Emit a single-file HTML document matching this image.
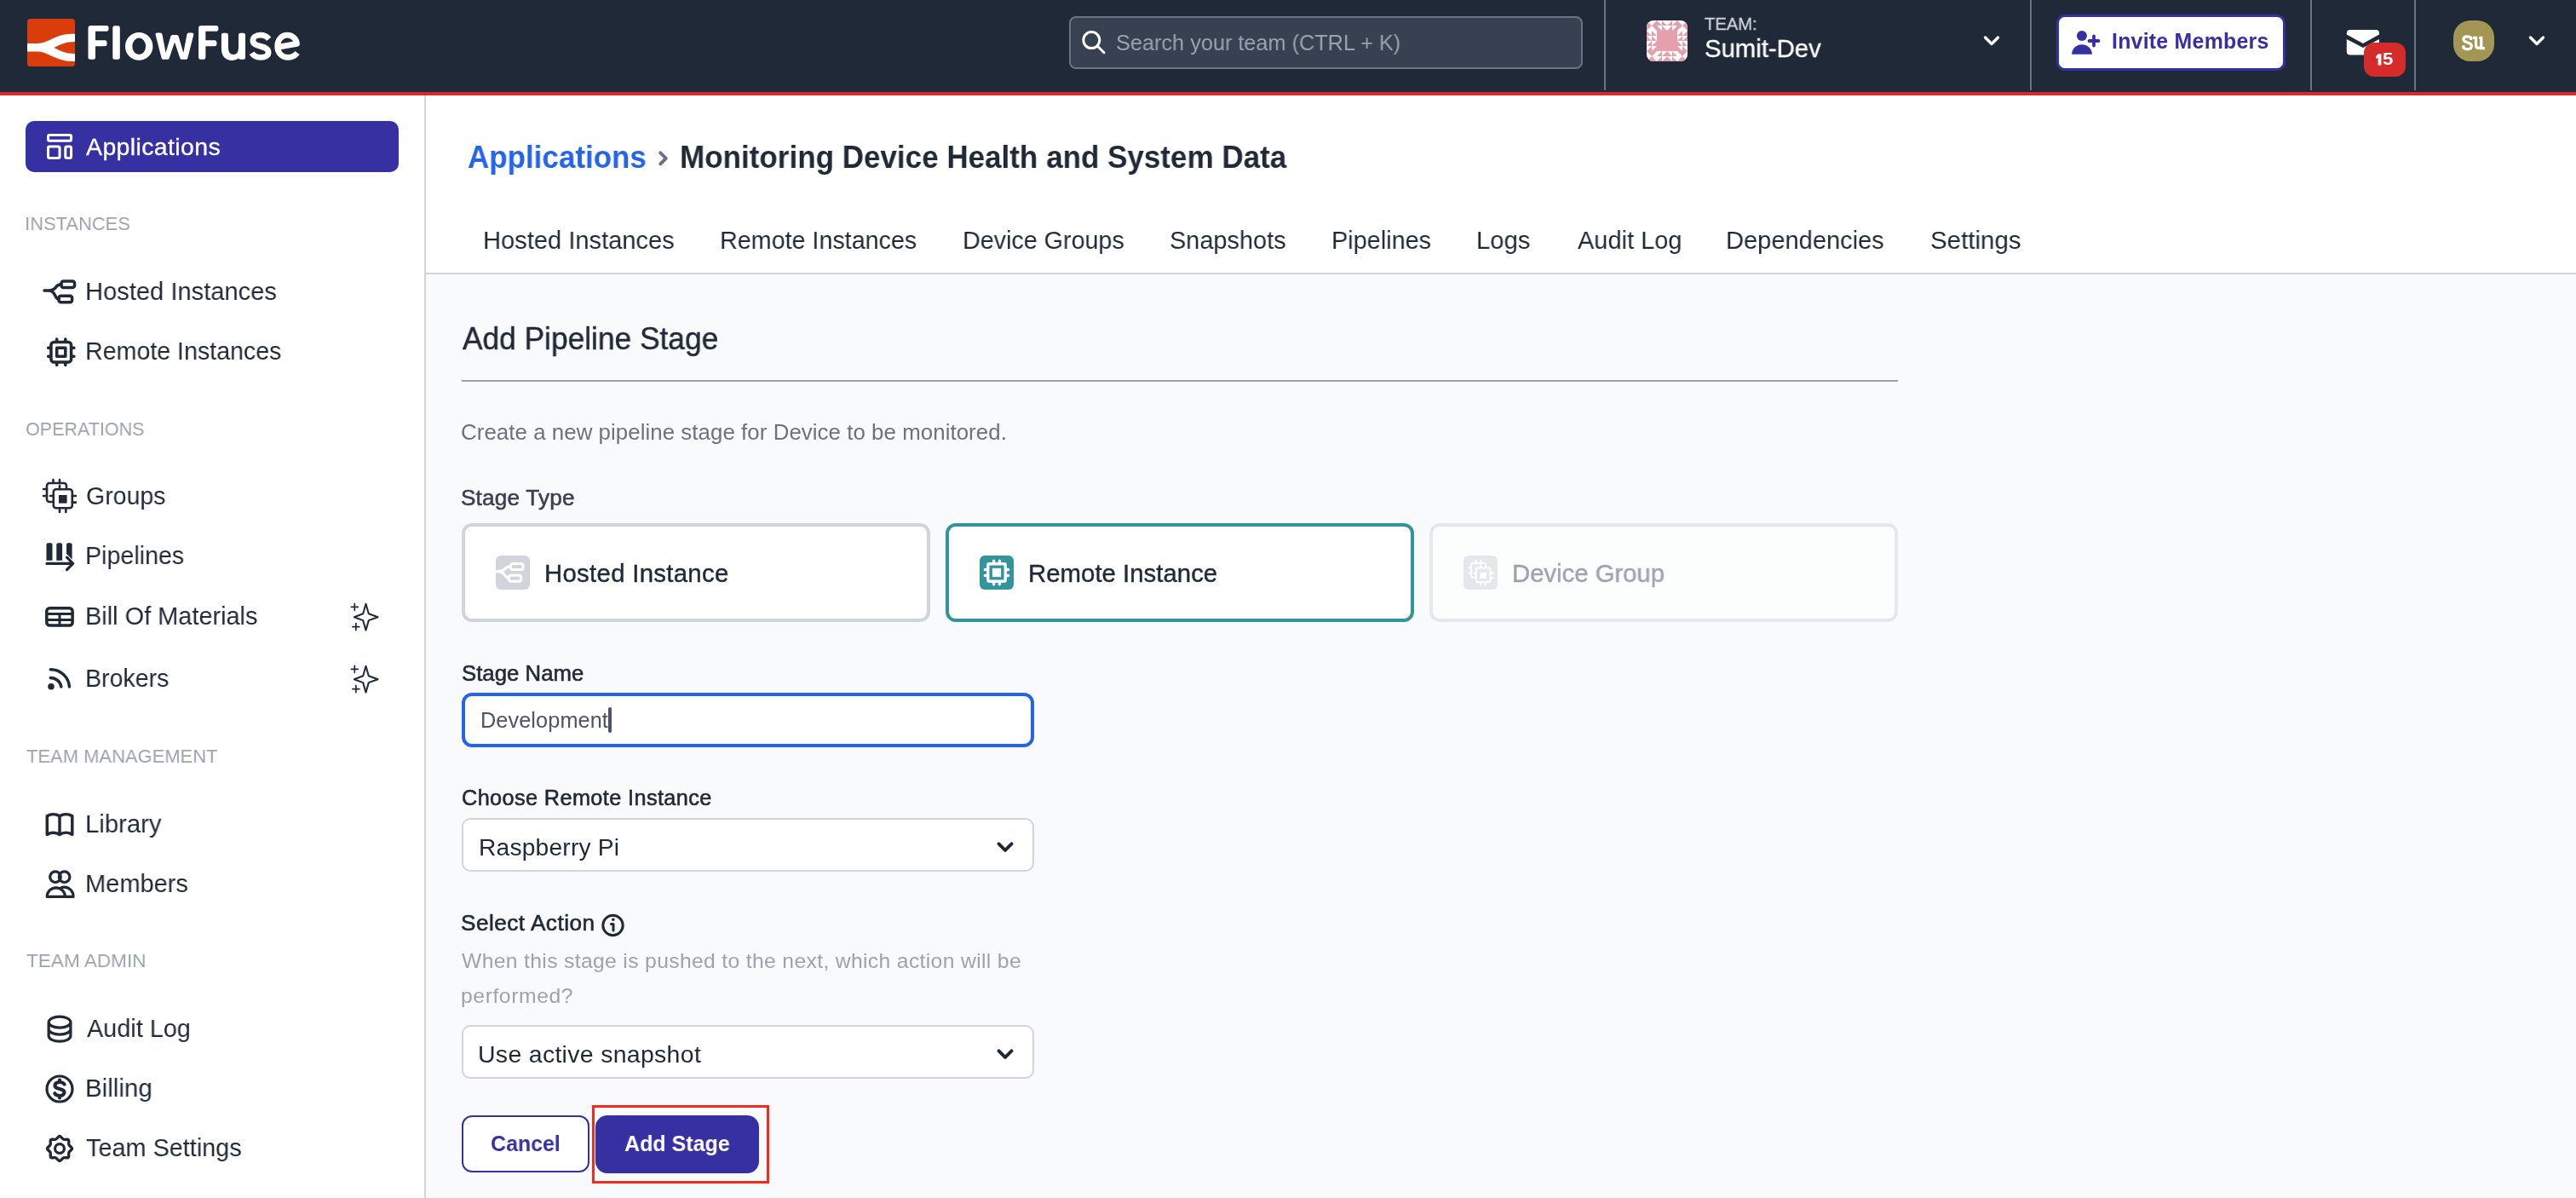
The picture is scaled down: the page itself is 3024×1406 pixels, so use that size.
<!DOCTYPE html>
<html><head><meta charset="utf-8"><style>
html,body{margin:0;padding:0;width:3024px;height:1406px;overflow:hidden;background:#fff}
body{position:relative;font-family:"Liberation Sans",sans-serif}
.t{position:absolute;white-space:pre;font-family:"Liberation Sans",sans-serif;will-change:transform}
svg{display:block}
</style></head><body>
<div style="position:absolute;left:0px;top:0px;width:3024px;height:108px;background:#1f2937"></div>
<div style="position:absolute;left:0px;top:108px;width:3024px;height:4px;background:#d62a2a"></div>
<div style="position:absolute;left:0px;top:112px;width:498px;height:1294px;background:#fff"></div>
<div style="position:absolute;left:498px;top:112px;width:2px;height:1294px;background:#d1d5db"></div>
<div style="position:absolute;left:500px;top:112px;width:2524px;height:208px;background:#fff"></div>
<div style="position:absolute;left:500px;top:320px;width:2524px;height:2px;background:#d1d5db"></div>
<div style="position:absolute;left:500px;top:322px;width:2524px;height:1084px;background:#f9fafb"></div>
<div style="position:absolute;left:1255px;top:19px;width:603px;height:62px;background:#374151;border:2px solid #6b7280;border-radius:8px;box-sizing:border-box"></div>
<div class="t" style="left:1310.35px;top:37.65px;font-size:25.58px;line-height:25.58px;font-weight:400;color:#9ca3af;letter-spacing:0.000px;transform:scaleX(0.9885);transform-origin:1.15px 0">Search your team (CTRL + K)</div>
<div style="position:absolute;left:1883px;top:0px;width:2px;height:106px;background:#6b7280"></div>
<div class="t" style="left:2001.28px;top:17.26px;font-size:21.08px;line-height:21.08px;font-weight:400;color:#d1d5db;letter-spacing:0.000px;transform:scaleX(0.9570);transform-origin:0.42px 0;-webkit-text-stroke:0.3px #d1d5db">TEAM:</div>
<div class="t" style="left:2000.65px;top:41.75px;font-size:29.94px;line-height:29.94px;font-weight:400;color:#fff;letter-spacing:0.000px;transform:scaleX(0.9788);transform-origin:1.35px 0;-webkit-text-stroke:0.3px #fff">Sumit-Dev</div>
<div style="position:absolute;left:2383px;top:0px;width:2px;height:106px;background:#6b7280"></div>
<div style="position:absolute;left:2414px;top:17px;width:269px;height:66px;background:#fff;border:3px solid #3730a3;border-radius:10px;box-sizing:border-box"></div>
<div class="t" style="left:2479.38px;top:37.06px;font-size:24.85px;line-height:24.85px;font-weight:700;color:#3730a3;letter-spacing:0.259px">Invite Members</div>
<div style="position:absolute;left:2712px;top:0px;width:2px;height:106px;background:#6b7280"></div>
<div style="position:absolute;left:2834px;top:0px;width:2px;height:106px;background:#6b7280"></div>
<div style="position:absolute;left:2880px;top:24px;width:48px;height:48px;background:#a39654;border-radius:20px"></div>
<div style="position:absolute;left:30px;top:142px;width:438px;height:60px;background:#3730a3;border-radius:10px"></div>
<div class="t" style="left:101.20px;top:158.28px;font-size:28.49px;line-height:28.49px;font-weight:400;color:#fff;letter-spacing:0.377px;-webkit-text-stroke:0.3px #fff">Applications</div>
<div class="t" style="left:29.23px;top:251.36px;font-size:22.97px;line-height:22.97px;font-weight:400;color:#9ca3af;letter-spacing:0.000px;transform:scaleX(0.9539);transform-origin:2.07px 0">INSTANCES</div>
<div class="t" style="left:30.27px;top:492.36px;font-size:22.97px;line-height:22.97px;font-weight:400;color:#9ca3af;letter-spacing:0.000px;transform:scaleX(0.9363);transform-origin:1.03px 0">OPERATIONS</div>
<div class="t" style="left:30.84px;top:875.86px;font-size:22.97px;line-height:22.97px;font-weight:400;color:#9ca3af;letter-spacing:0.000px;transform:scaleX(0.9560);transform-origin:0.46px 0">TEAM MANAGEMENT</div>
<div class="t" style="left:30.84px;top:1116.06px;font-size:22.97px;line-height:22.97px;font-weight:400;color:#9ca3af;letter-spacing:0.000px;transform:scaleX(0.9833);transform-origin:0.46px 0">TEAM ADMIN</div>
<div class="t" style="left:99.62px;top:327.48px;font-size:29.80px;line-height:29.80px;font-weight:400;color:#1f2937;letter-spacing:0.000px;transform:scaleX(0.9768);transform-origin:2.38px 0">Hosted Instances</div>
<div class="t" style="left:99.62px;top:397.28px;font-size:29.80px;line-height:29.80px;font-weight:400;color:#1f2937;letter-spacing:0.000px;transform:scaleX(0.9589);transform-origin:2.38px 0">Remote Instances</div>
<div class="t" style="left:100.51px;top:566.78px;font-size:29.80px;line-height:29.80px;font-weight:400;color:#1f2937;letter-spacing:0.000px;transform:scaleX(0.9559);transform-origin:1.49px 0">Groups</div>
<div class="t" style="left:99.62px;top:636.78px;font-size:29.80px;line-height:29.80px;font-weight:400;color:#1f2937;letter-spacing:0.000px;transform:scaleX(0.9596);transform-origin:2.38px 0">Pipelines</div>
<div class="t" style="left:99.62px;top:707.78px;font-size:29.80px;line-height:29.80px;font-weight:400;color:#1f2937;letter-spacing:0.000px;transform:scaleX(0.9700);transform-origin:2.38px 0">Bill Of Materials</div>
<div class="t" style="left:99.62px;top:780.78px;font-size:29.80px;line-height:29.80px;font-weight:400;color:#1f2937;letter-spacing:0.000px;transform:scaleX(0.9574);transform-origin:2.38px 0">Brokers</div>
<div class="t" style="left:99.62px;top:952.48px;font-size:29.80px;line-height:29.80px;font-weight:400;color:#1f2937;letter-spacing:0.000px;transform:scaleX(0.9814);transform-origin:2.38px 0">Library</div>
<div class="t" style="left:99.62px;top:1022.08px;font-size:29.80px;line-height:29.80px;font-weight:400;color:#1f2937;letter-spacing:0.000px;transform:scaleX(0.9733);transform-origin:2.38px 0">Members</div>
<div class="t" style="left:102.00px;top:1192.48px;font-size:29.80px;line-height:29.80px;font-weight:400;color:#1f2937;letter-spacing:0.000px;transform:scaleX(0.9681);transform-origin:0.00px 0">Audit Log</div>
<div class="t" style="left:99.62px;top:1262.08px;font-size:29.80px;line-height:29.80px;font-weight:400;color:#1f2937;letter-spacing:0.000px;transform:scaleX(0.9908);transform-origin:2.38px 0">Billing</div>
<div class="t" style="left:101.40px;top:1332.18px;font-size:29.80px;line-height:29.80px;font-weight:400;color:#1f2937;letter-spacing:0.000px;transform:scaleX(0.9673);transform-origin:0.60px 0">Team Settings</div>
<div class="t" style="left:549.10px;top:167.39px;font-size:36.05px;line-height:36.05px;font-weight:700;color:#2563eb;letter-spacing:0.000px;transform:scaleX(0.9699);transform-origin:0.90px 0">Applications</div>
<div class="t" style="left:798.16px;top:167.39px;font-size:36.05px;line-height:36.05px;font-weight:700;color:#1f2937;letter-spacing:0.000px;transform:scaleX(0.9715);transform-origin:2.34px 0">Monitoring Device Health and System Data</div>
<div class="t" style="left:566.52px;top:266.78px;font-size:29.80px;line-height:29.80px;font-weight:400;color:#1f2937;letter-spacing:0.000px;transform:scaleX(0.9760);transform-origin:2.38px 0">Hosted Instances</div>
<div class="t" style="left:844.82px;top:266.78px;font-size:29.80px;line-height:29.80px;font-weight:400;color:#1f2937;letter-spacing:0.000px;transform:scaleX(0.9623);transform-origin:2.38px 0">Remote Instances</div>
<div class="t" style="left:1129.52px;top:266.78px;font-size:29.80px;line-height:29.80px;font-weight:400;color:#1f2937;letter-spacing:0.000px;transform:scaleX(0.9624);transform-origin:2.38px 0">Device Groups</div>
<div class="t" style="left:1373.26px;top:266.78px;font-size:29.80px;line-height:29.80px;font-weight:400;color:#1f2937;letter-spacing:0.000px;transform:scaleX(0.9696);transform-origin:1.34px 0">Snapshots</div>
<div class="t" style="left:1563.32px;top:266.78px;font-size:29.80px;line-height:29.80px;font-weight:400;color:#1f2937;letter-spacing:0.000px;transform:scaleX(0.9673);transform-origin:2.38px 0">Pipelines</div>
<div class="t" style="left:1732.82px;top:266.78px;font-size:29.80px;line-height:29.80px;font-weight:400;color:#1f2937;letter-spacing:0.000px;transform:scaleX(0.9799);transform-origin:2.38px 0">Logs</div>
<div class="t" style="left:1851.60px;top:266.78px;font-size:29.80px;line-height:29.80px;font-weight:400;color:#1f2937;letter-spacing:0.000px;transform:scaleX(0.9729);transform-origin:0.00px 0">Audit Log</div>
<div class="t" style="left:2026.22px;top:266.78px;font-size:29.80px;line-height:29.80px;font-weight:400;color:#1f2937;letter-spacing:0.000px;transform:scaleX(0.9748);transform-origin:2.38px 0">Dependencies</div>
<div class="t" style="left:2265.96px;top:266.78px;font-size:29.80px;line-height:29.80px;font-weight:400;color:#1f2937;letter-spacing:0.000px;transform:scaleX(0.9902);transform-origin:1.34px 0">Settings</div>
<div class="t" style="left:543.10px;top:379.62px;font-size:36.48px;line-height:36.48px;font-weight:400;color:#1f2937;letter-spacing:0.000px;transform:scaleX(0.9678);transform-origin:0.00px 0;-webkit-text-stroke:0.45px #1f2937">Add Pipeline Stage</div>
<div style="position:absolute;left:542px;top:446px;width:1686px;height:2px;background:#9ca3af"></div>
<div class="t" style="left:541.21px;top:494.60px;font-size:25.87px;line-height:25.87px;font-weight:400;color:#6b7280;letter-spacing:0.048px">Create a new pipeline stage for Device to be monitored.</div>
<div class="t" style="left:541.32px;top:570.85px;font-size:26.16px;line-height:26.16px;font-weight:400;color:#374151;letter-spacing:0.177px;-webkit-text-stroke:0.55px #374151">Stage Type</div>
<div style="position:absolute;left:542px;top:614px;width:550px;height:116px;background:#fff;border:4px solid #d1d5db;border-radius:12px;box-sizing:border-box"></div>
<div style="position:absolute;left:582px;top:652px;width:40px;height:40px;background:#d1d5db;border-radius:6px"></div>
<div class="t" style="left:639.15px;top:657.95px;font-size:29.36px;line-height:29.36px;font-weight:400;color:#1f2937;letter-spacing:0.289px;-webkit-text-stroke:0.4px #1f2937">Hosted Instance</div>
<div style="position:absolute;left:1110px;top:614px;width:550px;height:116px;background:#fff;border:4px solid #31959b;border-radius:12px;box-sizing:border-box"></div>
<div style="position:absolute;left:1150px;top:652px;width:40px;height:40px;background:#31959b;border-radius:6px"></div>
<div class="t" style="left:1207.15px;top:657.95px;font-size:29.36px;line-height:29.36px;font-weight:400;color:#1f2937;letter-spacing:0.015px;-webkit-text-stroke:0.4px #1f2937">Remote Instance</div>
<div style="position:absolute;left:1678px;top:614px;width:550px;height:116px;background:#fcfdfd;border:4px solid #e5e7eb;border-radius:12px;box-sizing:border-box"></div>
<div style="position:absolute;left:1718px;top:652px;width:40px;height:40px;background:#e5e7eb;border-radius:6px"></div>
<div class="t" style="left:1775.15px;top:657.95px;font-size:29.36px;line-height:29.36px;font-weight:400;color:#9ca3af;letter-spacing:0.000px;transform:scaleX(0.9971);transform-origin:2.35px 0;-webkit-text-stroke:0.4px #9ca3af">Device Group</div>
<div class="t" style="left:541.84px;top:777.52px;font-size:25.73px;line-height:25.73px;font-weight:400;color:#1f2937;letter-spacing:0.031px;-webkit-text-stroke:0.6px #1f2937">Stage Name</div>
<div style="position:absolute;left:542px;top:813px;width:672px;height:64px;background:#fff;border:4px solid #2563eb;border-radius:12px;box-sizing:border-box"></div>
<div class="t" style="left:564.28px;top:832.59px;font-size:25.29px;line-height:25.29px;font-weight:400;color:#4b5563;letter-spacing:0.089px">Development</div>
<div style="position:absolute;left:714px;top:830px;width:4px;height:29.5px;background:#4b5563;border-radius:2px"></div>
<div class="t" style="left:541.74px;top:923.59px;font-size:25.29px;line-height:25.29px;font-weight:400;color:#1f2937;letter-spacing:0.381px;-webkit-text-stroke:0.6px #1f2937">Choose Remote Instance</div>
<div style="position:absolute;left:542px;top:960px;width:672px;height:63px;background:#fff;border:2px solid #d1d5db;border-radius:10px;box-sizing:border-box"></div>
<div class="t" style="left:561.74px;top:980.13px;font-size:28.20px;line-height:28.20px;font-weight:400;color:#1f2937;letter-spacing:0.191px">Raspberry Pi</div>
<div class="t" style="left:541.32px;top:1070.15px;font-size:26.16px;line-height:26.16px;font-weight:400;color:#1f2937;letter-spacing:0.488px;-webkit-text-stroke:0.6px #1f2937">Select Action</div>
<div class="t" style="left:542.38px;top:1116.38px;font-size:24.71px;line-height:24.71px;font-weight:400;color:#9ca3af;letter-spacing:0.336px">When this stage is pushed to the next, which action will be</div>
<div class="t" style="left:540.89px;top:1156.68px;font-size:24.71px;line-height:24.71px;font-weight:400;color:#9ca3af;letter-spacing:0.576px">performed?</div>
<div style="position:absolute;left:542px;top:1203px;width:672px;height:63px;background:#fff;border:2px solid #d1d5db;border-radius:10px;box-sizing:border-box"></div>
<div class="t" style="left:561.46px;top:1223.18px;font-size:28.49px;line-height:28.49px;font-weight:400;color:#1f2937;letter-spacing:0.294px">Use active snapshot</div>
<div style="position:absolute;left:542px;top:1309px;width:150px;height:67px;background:#fff;border:2px solid #3730a3;border-radius:12px;box-sizing:border-box"></div>
<div class="t" style="left:575.95px;top:1328.85px;font-size:26.16px;line-height:26.16px;font-weight:700;color:#3730a3;letter-spacing:0.000px;transform:scaleX(0.9525);transform-origin:1.05px 0">Cancel</div>
<div style="position:absolute;left:699px;top:1309px;width:192px;height:68px;background:#3730a3;border-radius:14px"></div>
<div class="t" style="left:733.05px;top:1328.85px;font-size:26.16px;line-height:26.16px;font-weight:700;color:#fff;letter-spacing:0.000px;transform:scaleX(0.9569);transform-origin:0.65px 0">Add Stage</div>
<div style="position:absolute;left:694.5px;top:1297px;width:208.0px;height:91.5px;border:3.3px solid #f52a1c;box-sizing:border-box"></div>
<svg style="position:absolute;left:0;top:0" width="3024" height="1406" viewBox="0 0 3024 1406">
<rect x="32" y="22" width="56" height="56" rx="3.5" fill="#da3c0b"/>
<path transform="translate(32 22)" d="M0 29 H12 C24 29 34 17.8 52 17.8 H56 V26.9 C45 26.9 38 30.5 31.3 33.9 C38 37.3 45 40.9 56 40.9 V50 H52 C34 50 24 38.6 12 38.6 H0 Z" fill="#fff"/>
<path transform="translate(103.5 0)" d="M0 33 Q0 30 3 30 H21.5 Q24 30 24 32.5 V34.3 Q24 36.8 21.5 36.8 H8.5 V47.3 H19.5 Q22 47.3 22 49.8 V51.8 Q22 54.3 19.5 54.3 H8.5 V67.3 Q8.5 69.8 6 69.8 H2.5 Q0 69.8 0 67.3 Z" fill="#fff"/>
<path transform="translate(233.1 0) scale(0.97 1)" d="M0 33 Q0 30 3 30 H21.5 Q24 30 24 32.5 V34.3 Q24 36.8 21.5 36.8 H8.5 V47.3 H19.5 Q22 47.3 22 49.8 V51.8 Q22 54.3 19.5 54.3 H8.5 V67.3 Q8.5 69.8 6 69.8 H2.5 Q0 69.8 0 67.3 Z" fill="#fff"/>
<rect x="132.3" y="30.2" width="8.5" height="39.6" rx="2.3" fill="#fff"/>
<path fill-rule="evenodd" d="M147 54.4 A16.2 16.4 0 1 0 179.4 54.4 A16.2 16.4 0 1 0 147 54.4 Z M155.3 54.3 A7.9 9.75 0 1 0 171.1 54.3 A7.9 9.75 0 1 0 155.3 54.3 Z" fill="#fff"/>
<path d="M182.6 40.8 L189.6 68.3 Q190 69.8 191.5 69.8 H196.8 Q198.3 69.8 198.7 68.3 L205 49.5 L211.3 68.3 Q211.7 69.8 213.2 69.8 H218.4 Q219.9 69.8 220.3 68.3 L227.3 40.8 Q227.7 38.5 225.5 38.5 H221.3 Q219.8 38.5 219.5 40 L215.3 62 L209.6 42.5 Q209 41 207.5 41 H202.5 Q201 41 200.4 42.5 L194.6 62 L190.4 40 Q190 38.5 188.5 38.5 H184.4 Q182.2 38.5 182.6 40.8 Z" fill="#fff"/>
<path d="M259.9 41 Q259.9 38.8 262 38.8 H265.8 Q267.9 38.8 267.9 41 V55.5 Q267.9 64.1 274 64.1 Q280 64.1 280 55.5 V41 Q280 38.8 282 38.8 H285.9 Q288 38.8 288 41 V67.6 Q288 69.8 285.9 69.8 H282.2 Q280.4 69.8 280.1 68.2 Q277.5 70.9 272.8 70.9 Q259.9 70.9 259.9 56.5 Z" fill="#fff"/>
<path d="M315.6 45.8 C313 42.5 309.3 41.2 305.6 41.2 C300.5 41.2 296.9 44 296.9 47.8 C296.9 51.8 301 53.1 306 54.4 C311 55.7 315.1 57 315.1 61.5 C315.1 65.3 311.3 67.4 306 67.4 C301.5 67.4 297.8 65.8 295.6 62.3" fill="none" stroke="#fff" stroke-width="6.8" stroke-linecap="butt" stroke-linejoin="round"/>
<path d="M325.8 55.3 L348.5 51.4 C347.8 45 342.6 41.2 337 41.2 C330.5 41.2 325.7 47 325.7 54.3 C325.7 62 331 67.4 338 67.4 C342.7 67.4 346.3 65.6 349 62" fill="none" stroke="#fff" stroke-width="6.8" stroke-linecap="butt" stroke-linejoin="round"/>
<circle cx="1281.3" cy="47.1" r="9.5" fill="none" stroke="#fff" stroke-width="3" stroke-linecap="round" stroke-linejoin="round"/><path d="M1288.5 54.3 L1296 61.8" fill="none" stroke="#fff" stroke-width="3" stroke-linecap="round" stroke-linejoin="round"/>
<clipPath id="avc"><rect x="1933" y="24" width="48" height="48" rx="8"/></clipPath><g clip-path="url(#avc)"><rect x="1933" y="24" width="48" height="48" fill="#fff"/><path d="M1933 24L1939 30H1933zM1945 24V30H1939zM1945 24L1951 30H1945zM1951 24L1957 30H1951zM1963 24V30H1957zM1969 24V30H1963zM1969 24L1975 30H1969zM1981 24V30H1975zM1933 30H1939L1933 36zM1939 30H1945V36zM1945 30L1951 36H1945zM1951 30L1957 36H1951zM1963 30V36H1957zM1969 30V36H1963zM1969 30H1975L1969 36zM1975 30H1981V36zM1933 36L1939 42H1933zM1939 36L1945 42H1939zM1945 36h6v6h-6zM1951 36h6v6h-6zM1957 36h6v6h-6zM1963 36h6v6h-6zM1975 36V42H1969zM1981 36V42H1975zM1933 42L1939 48H1933zM1939 42L1945 48H1939zM1945 42h6v6h-6zM1951 42h6v6h-6zM1957 42h6v6h-6zM1963 42h6v6h-6zM1975 42V48H1969zM1981 42V48H1975zM1939 48V54H1933zM1945 48V54H1939zM1945 48h6v6h-6zM1951 48h6v6h-6zM1957 48h6v6h-6zM1963 48h6v6h-6zM1969 48L1975 54H1969zM1975 48L1981 54H1975zM1939 54V60H1933zM1945 54V60H1939zM1945 54h6v6h-6zM1951 54h6v6h-6zM1957 54h6v6h-6zM1963 54h6v6h-6zM1969 54L1975 60H1969zM1975 54L1981 60H1975zM1933 60H1939V66zM1939 60H1945L1939 66zM1951 60V66H1945zM1957 60V66H1951zM1957 60L1963 66H1957zM1963 60L1969 66H1963zM1969 60H1975V66zM1975 60H1981L1975 66zM1939 66V72H1933zM1939 66L1945 72H1939zM1951 66V72H1945zM1957 66V72H1951zM1957 66L1963 72H1957zM1963 66L1969 72H1963zM1975 66V72H1969zM1975 66L1981 72H1975z" fill="#e6a0ad"/></g>
<path d="M2330.5 44 L2338 51.5 L2345.5 44" fill="none" stroke="#fff" stroke-width="3.5" stroke-linecap="round" stroke-linejoin="round"/>
<circle cx="2443.9" cy="41.9" r="6" fill="#3730a3"/><path d="M2432.1 63.8 A11.9 11.7 0 0 1 2455.9 63.8 Z" fill="#3730a3"/><path d="M2458 42.5 V53.5 M2452.5 48 H2463.5" fill="none" stroke="#3730a3" stroke-width="3.8" stroke-linecap="round" stroke-linejoin="round"/>
<path d="M2754.8 39 a4 4 0 0 1 4-4 h30.2 a4 4 0 0 1 4 4 v1.5 L2774 51 L2754.8 40.5 Z M2754.8 46 L2774 56 L2793 46 V60.4 a4 4 0 0 1 -4 4 H2758.8 a4 4 0 0 1 -4 -4 Z" fill="#fff"/>
<rect x="2775" y="50" width="49" height="40" rx="12" fill="#d52b2b"/>
<path d="M2791.6 63.2 H2795.4 V76.4 H2791.6 V67.8 C2790.9 68.4 2789.9 68.8 2789 69 V65.8 C2790.2 65.4 2791.1 64.4 2791.6 63.2 Z" fill="#fff"/>
<text x="2797.12" y="76.4" font-family="Liberation Sans" font-weight="700" font-size="19.48" fill="#fff" transform="translate(2797.70 0) scale(1.140 1) translate(-2797.70 0)">5</text>
<path d="M2900.6 47 V44.2 C2899.2 43.3 2897.7 42.9 2896.3 42.9 C2893.4 42.9 2891.9 44.4 2891.9 46.3 C2891.9 48.5 2894 49.2 2896.6 49.9 C2899.5 50.7 2901.4 51.6 2901.4 54.1 C2901.4 56.4 2899.4 57.8 2896.4 57.8 C2894.6 57.8 2893.1 57.4 2891.9 56.2 V53.2" fill="none" stroke="#fff" stroke-width="3.2" stroke-linejoin="round"/><path d="M2902.8 44.3 H2906.5 V52.8 C2906.5 55.6 2907.9 56.4 2909.6 56.4 C2911.6 56.4 2912.8 55 2912.8 52.6 V44.3 H2910.3 M2912.8 52 V56.6 H2917" fill="none" stroke="#fff" stroke-width="3.2" stroke-linejoin="miter"/>
<path d="M2970.5 44 L2978 51.5 L2985.5 44" fill="none" stroke="#fff" stroke-width="3.5" stroke-linecap="round" stroke-linejoin="round"/>
<g transform="translate(49.76 151.76) scale(1.69)"><path d="M4 5a1 1 0 011-1h14a1 1 0 011 1v2a1 1 0 01-1 1H5a1 1 0 01-1-1V5zM4 13a1 1 0 011-1h6a1 1 0 011 1v6a1 1 0 01-1 1H5a1 1 0 01-1-1v-6zM16 13a1 1 0 011-1h2a1 1 0 011 1v6a1 1 0 01-1 1h-2a1 1 0 01-1-1v-6z" fill="none" stroke="#fff" stroke-width="1.8"/></g>
<path d="M52 341 H57 C62 341 64 339.5 66 336.5 C67.5 334.3 69 333.7 72 333.7 M57 341 C61.5 341 63 343 64.5 346.5 C66 349.7 67 351 69 351" fill="none" stroke="#1f2937" stroke-width="3.5" stroke-linecap="round" stroke-linejoin="round"/><rect x="72" y="330" width="15.6" height="7.5" rx="2.5" fill="none" stroke="#1f2937" stroke-width="3.5" stroke-linecap="round" stroke-linejoin="round"/><rect x="69" y="347.3" width="15.6" height="7.5" rx="2.5" fill="none" stroke="#1f2937" stroke-width="3.5" stroke-linecap="round" stroke-linejoin="round"/>
<g transform="translate(51.5 393) scale(1.6875)" ><path d="M9 3v2m6-2v2M9 19v2m6-2v2M5 9H3m2 6H3m18-6h-2m2 6h-2M7 19h10a2 2 0 002-2V7a2 2 0 00-2-2H7a2 2 0 00-2 2v10a2 2 0 002 2zM9 9h6v6H9V9z" fill="none" stroke="#1f2937" stroke-width="2.1" stroke-linecap="round" stroke-linejoin="round"/></g>
<g transform=""><path d="M61 589 H58 a3 3 0 0 1 -3 -3 V570 a3 3 0 0 1 3 -3 H75 a3 3 0 0 1 3 3 V573" fill="none" stroke="#1f2937" stroke-width="2.6" stroke-linecap="round" stroke-linejoin="round"/><path d="M62.5 563 V567 M70 563 V567 M51 574 H55 M51 582 H55" fill="none" stroke="#1f2937" stroke-width="2.6" stroke-linecap="round" stroke-linejoin="round"/><rect x="62.8" y="574.3" width="22" height="22" rx="3" fill="#fff" fill="none" stroke="#1f2937" stroke-width="2.6" stroke-linecap="round" stroke-linejoin="round"/><path d="M70 570 V574 M70 597 V601 M77.3 597 V601 M85 582 H89 M85 589.6 H89 M59 582 H62.8" fill="none" stroke="#1f2937" stroke-width="2.6" stroke-linecap="round" stroke-linejoin="round"/><rect x="69" y="581" width="9.6" height="9.6" fill="#1f2937"/></g>
<path d="M54.5 639.2 q0 -2 2 -2 h3 q2 0 2 2 V657.7 H54.5 Z M66.3 639.2 q0 -2 2 -2 h2.8 q2 0 2 2 V657.7 H66.3 Z M78 639.2 q0 -2 2 -2 h2.6 q2 0 2 2 V656.5 L78 650 Z" fill="#1f2937"/><path d="M55 661.4 H85 M78.5 654.2 L85.7 661.4 L78.5 668.6" fill="none" stroke="#1f2937" stroke-width="3.2" stroke-linecap="round" stroke-linejoin="round"/>
<rect x="54.8" y="713.8" width="30.3" height="20.2" rx="3.5" fill="none" stroke="#1f2937" stroke-width="3.5" stroke-linecap="round" stroke-linejoin="round"/><path d="M55 720.5 H85 M55 727.6 H85 M70 720.5 V734" fill="none" stroke="#1f2937" stroke-width="3" stroke-linecap="round" stroke-linejoin="round"/>
<circle cx="60" cy="805.7" r="3.8" fill="#1f2937"/><path d="M59.3 785.8 A22 22 0 0 1 81.5 806 M59.3 795.5 A12.5 12.5 0 0 1 71.8 806" fill="none" stroke="#1f2937" stroke-width="3.5" stroke-linecap="round" stroke-linejoin="round"/>
<path d="M429.5 708.8 L432.8 720.3 L443.6 724.2 L432.8 728.1 L429.5 739.6 L426.2 728.1 L415.8 724.2 L426.2 720.3 Z" fill="none" stroke="#1f2937" stroke-width="2" stroke-linejoin="round"/><path d="M416.3 708.3 v8 M412.3 712.3 h8 M417.9 731.6 v8 M413.9 735.6 h8" fill="none" stroke="#1f2937" stroke-width="1.7" stroke-linecap="round" stroke-linejoin="round"/>
<path d="M429.5 781.8 L432.8 793.3 L443.6 797.2 L432.8 801.1 L429.5 812.6 L426.2 801.1 L415.8 797.2 L426.2 793.3 Z" fill="none" stroke="#1f2937" stroke-width="2" stroke-linejoin="round"/><path d="M416.3 781.3 v8 M412.3 785.3 h8 M417.9 804.6 v8 M413.9 808.6 h8" fill="none" stroke="#1f2937" stroke-width="1.7" stroke-linecap="round" stroke-linejoin="round"/>
<path d="M55.3 957.8 C59.5 955 65.5 955 70 957.8 C74.5 955 80.5 955 84.8 957.8 V979.5 C80.5 976.5 74.5 976.5 70 979.5 C65.5 976.5 59.5 976.5 55.3 979.5 Z M70 957.8 V979" fill="none" stroke="#1f2937" stroke-width="3.5" stroke-linecap="round" stroke-linejoin="round"/>
<circle cx="65" cy="1029.2" r="6.3" fill="none" stroke="#1f2937" stroke-width="3.2" stroke-linecap="round" stroke-linejoin="round"/><circle cx="75.6" cy="1029.2" r="6.3" fill="none" stroke="#1f2937" stroke-width="3.2" stroke-linecap="round" stroke-linejoin="round"/><path d="M55.2 1052.4 A10.6 10.6 0 0 1 76.4 1052.4 Z M70 1042.8 C71.5 1041.8 73.5 1041.2 75.4 1041.2 A10.6 10.6 0 0 1 86 1052.4 H76.4" fill="none" stroke="#1f2937" stroke-width="3.2" stroke-linecap="round" stroke-linejoin="round"/>
<g transform="translate(50.7 1188.4) scale(1.61)"><path d="M4 7v10c0 2.21 3.582 4 8 4s8-1.79 8-4V7M4 7c0 2.21 3.582 4 8 4s8-1.79 8-4M4 7c0-2.21 3.582-4 8-4s8 1.79 8 4m0 5c0 2.21-3.582 4-8 4s-8-1.79-8-4" fill="none" stroke="#1f2937" stroke-width="2" stroke-linecap="round" stroke-linejoin="round"/></g>
<circle cx="70" cy="1278" r="15" fill="none" stroke="#1f2937" stroke-width="3.2" stroke-linecap="round" stroke-linejoin="round"/><path d="M75.5 1272.5 C74.5 1270.8 72.5 1270 70 1270 C66.5 1270 64.5 1271.8 64.5 1274 C64.5 1276.5 67 1277.3 70 1278 C73 1278.7 75.5 1279.5 75.5 1282 C75.5 1284.2 73.5 1286 70 1286 C67.3 1286 65.3 1285 64.3 1283.3 M70 1267.5 V1270 M70 1286 V1288.5" fill="none" stroke="#1f2937" stroke-width="4.2" stroke-linecap="round" stroke-linejoin="round"/>
<path d="M68.76 1334.06 Q70.00 1332.80 71.24 1334.06 L73.77 1336.61 Q74.44 1337.28 75.39 1337.28 L78.98 1337.26 Q80.75 1337.25 80.74 1339.02 L80.72 1342.61 Q80.72 1343.56 81.39 1344.23 L83.94 1346.76 Q85.20 1348.00 83.94 1349.24 L81.39 1351.77 Q80.72 1352.44 80.72 1353.39 L80.74 1356.98 Q80.75 1358.75 78.98 1358.74 L75.39 1358.72 Q74.44 1358.72 73.77 1359.39 L71.24 1361.94 Q70.00 1363.20 68.76 1361.94 L66.23 1359.39 Q65.56 1358.72 64.61 1358.72 L61.02 1358.74 Q59.25 1358.75 59.26 1356.98 L59.28 1353.39 Q59.28 1352.44 58.61 1351.77 L56.06 1349.24 Q54.80 1348.00 56.06 1346.76 L58.61 1344.23 Q59.28 1343.56 59.28 1342.61 L59.26 1339.02 Q59.25 1337.25 61.02 1337.26 L64.61 1337.28 Q65.56 1337.28 66.23 1336.61 Z" fill="none" stroke="#1f2937" stroke-width="3.3" stroke-linecap="round" stroke-linejoin="round"/><circle cx="70" cy="1348" r="5.4" fill="none" stroke="#1f2937" stroke-width="3.2" stroke-linecap="round" stroke-linejoin="round"/>
<path d="M775.3 179.3 L781.8 185.8 L775.3 192.3" fill="none" stroke="#6b7280" stroke-width="4" stroke-linecap="round" stroke-linejoin="round"/>
<clipPath id="c1"><rect x="582" y="652" width="40" height="40" rx="6"/></clipPath><g clip-path="url(#c1)"><path d="M580 670.7 H585 C590 670.7 592 668.5 594 666.5 C595.5 665 597 664.8 599.5 664.8 M585 670.7 C589 670.7 591 673 592.5 675 C594 677.3 595 678.5 597.5 678.5" fill="none" stroke="#fff" stroke-width="3.2" stroke-linecap="round"/><rect x="599.5" y="661.5" width="14.5" height="7" rx="2.5" fill="none" stroke="#fff" stroke-width="3"/><rect x="597.3" y="675.3" width="14.5" height="7" rx="2.5" fill="none" stroke="#fff" stroke-width="3"/></g>
<g transform="translate(1152.86 654.86) scale(1.714)"><path d="M13 7H7v6h6V7z" fill="#fff"/><path fill-rule="evenodd" d="M7 2a1 1 0 012 0v1h2V2a1 1 0 112 0v1h2a2 2 0 012 2v2h1a1 1 0 110 2h-1v2h1a1 1 0 110 2h-1v2a2 2 0 01-2 2h-2v1a1 1 0 11-2 0v-1H9v1a1 1 0 11-2 0v-1H5a2 2 0 01-2-2v-2H2a1 1 0 110-2h1V9H2a1 1 0 010-2h1V5a2 2 0 012-2h2V2zM5 5h10v10H5V5z" fill="#fff"/></g>
<g transform="translate(1685.5 233) scale(0.755)"><path d="M61 589 H58 a3 3 0 0 1 -3 -3 V570 a3 3 0 0 1 3 -3 H75 a3 3 0 0 1 3 3 V573" fill="none" stroke="#fff" stroke-width="2.6" stroke-linecap="round" stroke-linejoin="round"/><path d="M62.5 563 V567 M70 563 V567 M51 574 H55 M51 582 H55" fill="none" stroke="#fff" stroke-width="2.6" stroke-linecap="round" stroke-linejoin="round"/><rect x="62.8" y="574.3" width="22" height="22" rx="3" fill="#e5e7eb" fill="none" stroke="#fff" stroke-width="2.6" stroke-linecap="round" stroke-linejoin="round"/><path d="M70 570 V574 M70 597 V601 M77.3 597 V601 M85 582 H89 M85 589.6 H89 M59 582 H62.8" fill="none" stroke="#fff" stroke-width="2.6" stroke-linecap="round" stroke-linejoin="round"/><rect x="69" y="581" width="9.6" height="9.6" fill="#fff"/></g>
<path d="M1172.5 990.3 L1180 997.8 L1187.5 990.3" fill="none" stroke="#1f2937" stroke-width="4" stroke-linecap="round" stroke-linejoin="round"/>
<circle cx="719.5" cy="1086" r="11.7" fill="none" stroke="#1f2937" stroke-width="3" stroke-linecap="round" stroke-linejoin="round"/><path d="M717.5 1084.5 H720 V1092" fill="none" stroke="#1f2937" stroke-width="3" stroke-linecap="round" stroke-linejoin="round"/><circle cx="719.8" cy="1079.3" r="1.8" fill="#1f2937"/>
<path d="M1172.5 1233.3 L1180 1240.8 L1187.5 1233.3" fill="none" stroke="#1f2937" stroke-width="4" stroke-linecap="round" stroke-linejoin="round"/>
</svg>
</body></html>
